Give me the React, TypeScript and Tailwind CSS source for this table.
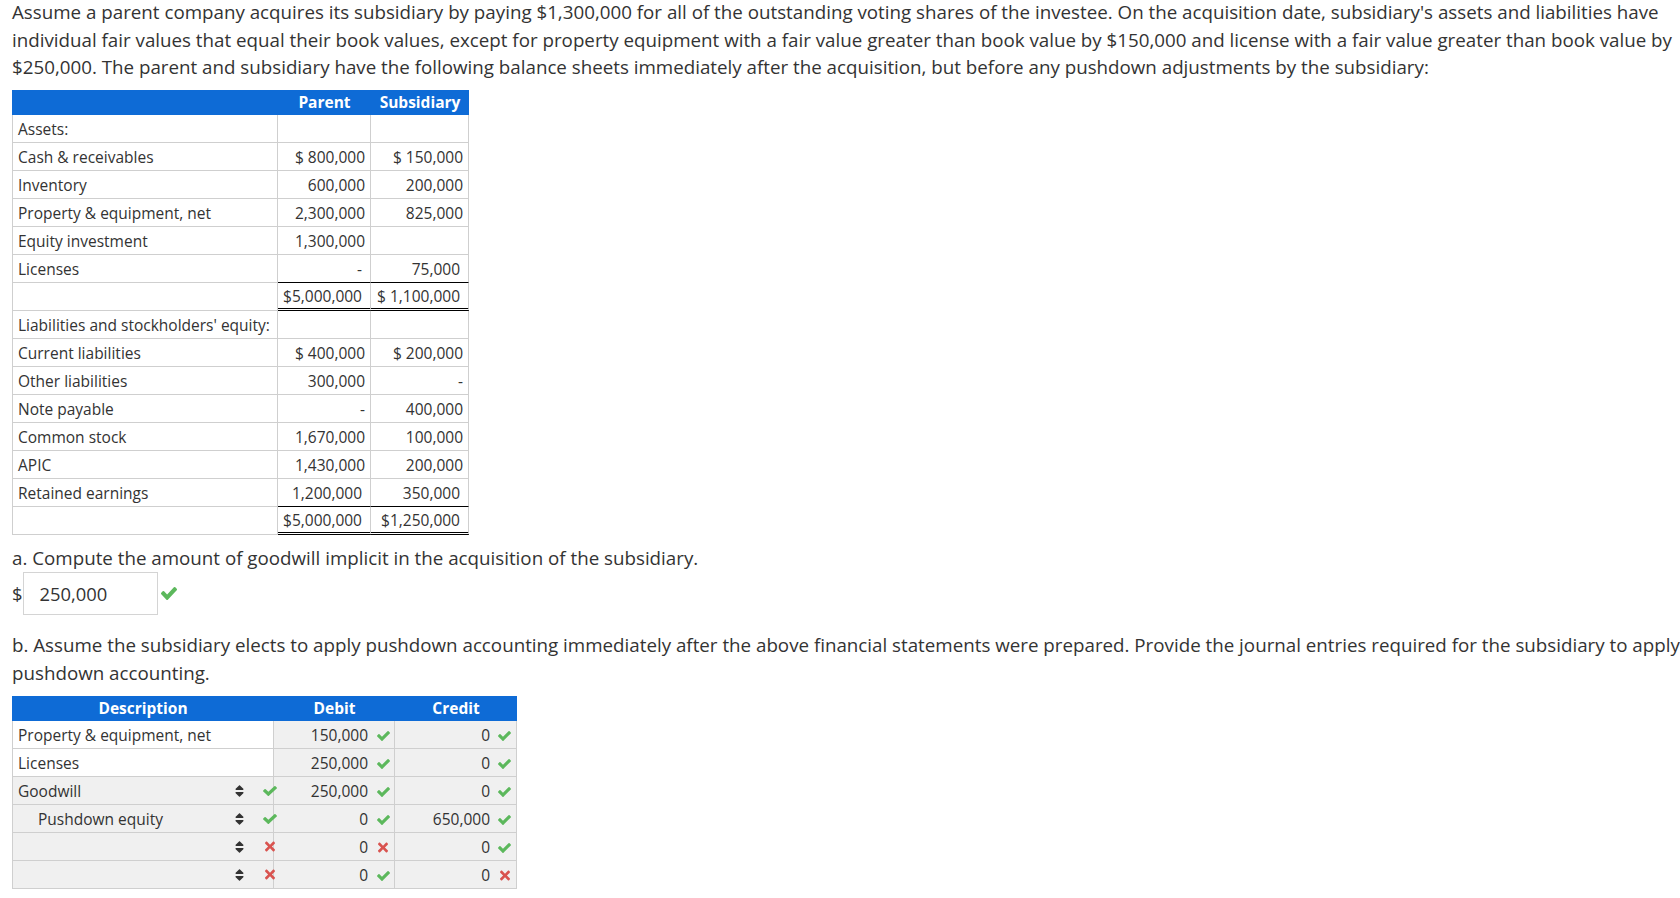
import React from "react";

function Check({ className = "" }: { className?: string }) {
  return (
    <svg viewBox="121 334 1550 1188" preserveAspectRatio="none" className={className} fill="currentColor">
      <path d="M1671 566q0 40-28 68l-724 724-136 136q-28 28-68 28t-68-28l-136-136-362-362q-28-28-28-68t28-68l136-136q28-28 68-28t68 28l294 295 656-657q28-28 68-28t68 28l136 136q28 28 28 68z" />
    </svg>
  );
}

function Cross({ className = "" }: { className?: string }) {
  return (
    <svg viewBox="0 60 352 392" preserveAspectRatio="none" className={className} fill="currentColor">
      <path d="M242.72 256l100.07-100.07c12.28-12.28 12.28-32.19 0-44.48l-22.24-22.24c-12.28-12.28-32.19-12.280-44.48 0L176 189.28 75.93 89.21c-12.28-12.28-32.19-12.28-44.48 0L9.21 111.45c-12.28 12.28-12.28 32.19 0 44.48L109.28 256 9.21 356.07c-12.28 12.28-12.28 32.19 0 44.48l22.24 22.24c12.28 12.28 32.2 12.28 44.48 0L176 322.72l100.07 100.07c12.28 12.28 32.2 12.28 44.48 0l22.24-22.24c12.28-12.28 12.28-32.19 0-44.48L242.72 256z" />
    </svg>
  );
}

function Sort({ className = "" }: { className?: string }) {
  return (
    <svg viewBox="0 50 320 412" preserveAspectRatio="none" className={className} fill="currentColor">
      <path d="M41 288h238c21.4 0 32.1 25.9 17 41L177 448c-9.4 9.4-24.6 9.4-33.9 0L24 329c-15.1-15.1-4.4-41 17-41zm255-105L177 64c-9.4-9.4-24.6-9.4-33.9 0L24 183c-15.1 15.1-4.4 41 17 41h238c21.4 0 32.1-25.9 17-41z" />
    </svg>
  );
}

type BRow = { label: string; p: string; s: string; kind?: "pre" | "total" };

const assets: BRow[] = [
  { label: "Assets:", p: "", s: "" },
  { label: "Cash & receivables", p: "$ 800,000", s: "$ 150,000" },
  { label: "Inventory", p: "600,000", s: "200,000" },
  { label: "Property & equipment, net", p: "2,300,000", s: "825,000" },
  { label: "Equity investment", p: "1,300,000", s: "" },
  { label: "Licenses", p: "-", s: "75,000", kind: "pre" },
  { label: "", p: "$5,000,000", s: "$ 1,100,000", kind: "total" },
];

const liabs: BRow[] = [
  { label: "Liabilities and stockholders' equity:", p: "", s: "" },
  { label: "Current liabilities", p: "$ 400,000", s: "$ 200,000" },
  { label: "Other liabilities", p: "300,000", s: "-" },
  { label: "Note payable", p: "-", s: "400,000" },
  { label: "Common stock", p: "1,670,000", s: "100,000" },
  { label: "APIC", p: "1,430,000", s: "200,000" },
  { label: "Retained earnings", p: "1,200,000", s: "350,000", kind: "pre" },
  { label: "", p: "$5,000,000", s: "$1,250,000", kind: "total" },
];

function BalanceRow({ r }: { r: BRow }) {
  const numBorder =
    r.kind === "pre"
      ? "border-b border-b-black"
      : r.kind === "total"
      ? "border-b-[3px] border-double border-b-black"
      : "border-b border-b-[#cfcfcf]";
  const pr = r.kind ? "pr-[8px]" : "pr-[5px]";
  return (
    <div className="grid grid-cols-[266px_93px_98px] h-[28px]">
      <div className="flex items-center pt-[2px] pl-[5px] border-l border-r border-b border-[#cfcfcf] whitespace-nowrap">
        {r.label}
      </div>
      <div className={`flex items-center justify-end pt-[2px] ${pr} border-r border-r-[#cfcfcf] ${numBorder} whitespace-nowrap`}>
        {r.p}
      </div>
      <div className={`flex items-center justify-end pt-[2px] ${pr} border-r border-r-[#cfcfcf] ${numBorder} whitespace-nowrap`}>
        {r.s}
      </div>
    </div>
  );
}

type JRow = {
  desc: string;
  indent?: boolean;
  select?: "ok" | "bad";
  white?: boolean;
  debit: string;
  dOk: boolean;
  credit: string;
  cOk: boolean;
};

const journal: JRow[] = [
  { desc: "Property & equipment, net", white: true, debit: "150,000", dOk: true, credit: "0", cOk: true },
  { desc: "Licenses", white: true, debit: "250,000", dOk: true, credit: "0", cOk: true },
  { desc: "Goodwill", select: "ok", debit: "250,000", dOk: true, credit: "0", cOk: true },
  { desc: "Pushdown equity", indent: true, select: "ok", debit: "0", dOk: true, credit: "650,000", cOk: true },
  { desc: "", select: "bad", debit: "0", dOk: false, credit: "0", cOk: true },
  { desc: "", select: "bad", debit: "0", dOk: true, credit: "0", cOk: false },
];

function Mark({ ok }: { ok: boolean }) {
  return ok ? (
    <Check className="w-[13px] h-[10px] text-[#5cb85c]" />
  ) : (
    <Cross className="w-[10px] h-[11px] text-[#d9534f]" />
  );
}

function JournalRow({ r }: { r: JRow }) {
  return (
    <div className="grid grid-cols-[262px_121px_122px] h-[28px]">
      <div
        className={`relative flex items-center pt-[2px] border-l border-r border-b border-[#cfcfcf] ${
          r.white ? "bg-white" : "bg-[#f0f0f0]"
        } ${r.indent ? "pl-[25px]" : "pl-[5px]"} whitespace-nowrap`}
      >
        {r.desc}
        {r.select && (
          <>
            <div className="absolute left-[222px] top-0 h-full flex items-center">
              <Sort className="w-[9px] h-[12px] text-[#333]" />
            </div>
            <div className="absolute left-[250px] top-0 h-full flex items-center z-10">
              {r.select === "ok" ? (
                <Check className="w-[14px] h-[10px] text-[#5cb85c]" />
              ) : (
                <Cross className="w-[10px] h-[11px] text-[#d9534f] ml-[2px]" />
              )}
            </div>
          </>
        )}
      </div>
      <div className="flex items-center justify-end pt-[2px] pr-[4px] bg-[#f0f0f0] border-r border-b border-[#cfcfcf]">
        <span>{r.debit}</span>
        <span className="ml-[8px] w-[14px] flex justify-center">
          <Mark ok={r.dOk} />
        </span>
      </div>
      <div className="flex items-center justify-end pt-[2px] pr-[5px] bg-[#f0f0f0] border-r border-b border-[#cfcfcf]">
        <span>{r.credit}</span>
        <span className="ml-[8px] w-[13px] flex justify-center">
          <Mark ok={r.cOk} />
        </span>
      </div>
    </div>
  );
}

export default function App() {
  return (
    <div className="w-[1680px] h-[898px] overflow-hidden bg-white text-[#333] font-['Open_Sans',sans-serif]">
      <p className="mt-[-2px] w-[1692px] pl-[12px] text-[18.75px] leading-[27.5px]">
        Assume a parent company acquires its subsidiary by paying $1,300,000 for all of the outstanding voting shares of
        the investee. On the acquisition date, subsidiary's assets and liabilities have individual fair values that
        equal their book values, except for property equipment with a fair value greater than book value by $150,000
        and license with a fair value greater than book value by $250,000. The parent and subsidiary have the following
        balance sheets immediately after the acquisition, but before any pushdown adjustments by the subsidiary:
      </p>

      <div className="mt-[9.5px] ml-[12px] w-[457px] text-[15.5px]">
        <div className="grid grid-cols-[266px_93px_98px] h-[25px] bg-[#0e6bd6] text-white font-bold">
          <div />
          <div className="flex items-center justify-center">Parent</div>
          <div className="flex items-center justify-center">Subsidiary</div>
        </div>
        {assets.map((r, i) => (
          <BalanceRow key={"a" + i} r={r} />
        ))}
        {liabs.map((r, i) => (
          <BalanceRow key={"l" + i} r={r} />
        ))}
      </div>

      <p className="mt-[9px] w-[1692px] pl-[12px] text-[18.75px] leading-[27.5px]">
        a. Compute the amount of goodwill implicit in the acquisition of the subsidiary.
      </p>
      <div className="mt-[0.5px] pl-[12px] flex items-center text-[18.4px]">
        <span>$</span>
        <div className="w-[135px] h-[43px] border border-[#d4d4d4] flex items-center pl-[16px]">250,000</div>
        <Check className="ml-[3px] w-[16px] h-[13px] text-[#5cb85c]" />
      </div>

      <p className="mt-[16px] w-[1692px] pl-[12px] text-[18.75px] leading-[27.5px]">
        b. Assume the subsidiary elects to apply pushdown accounting immediately after the above financial statements
        were prepared. Provide the journal entries required for the subsidiary to apply pushdown accounting.
      </p>

      <div className="mt-[10px] ml-[12px] w-[505px] text-[15.5px]">
        <div className="grid grid-cols-[262px_121px_122px] h-[25px] bg-[#0e6bd6] text-white font-bold">
          <div className="flex items-center justify-center">Description</div>
          <div className="flex items-center justify-center">Debit</div>
          <div className="flex items-center justify-center">Credit</div>
        </div>
        {journal.map((r, i) => (
          <JournalRow key={i} r={r} />
        ))}
      </div>
    </div>
  );
}
